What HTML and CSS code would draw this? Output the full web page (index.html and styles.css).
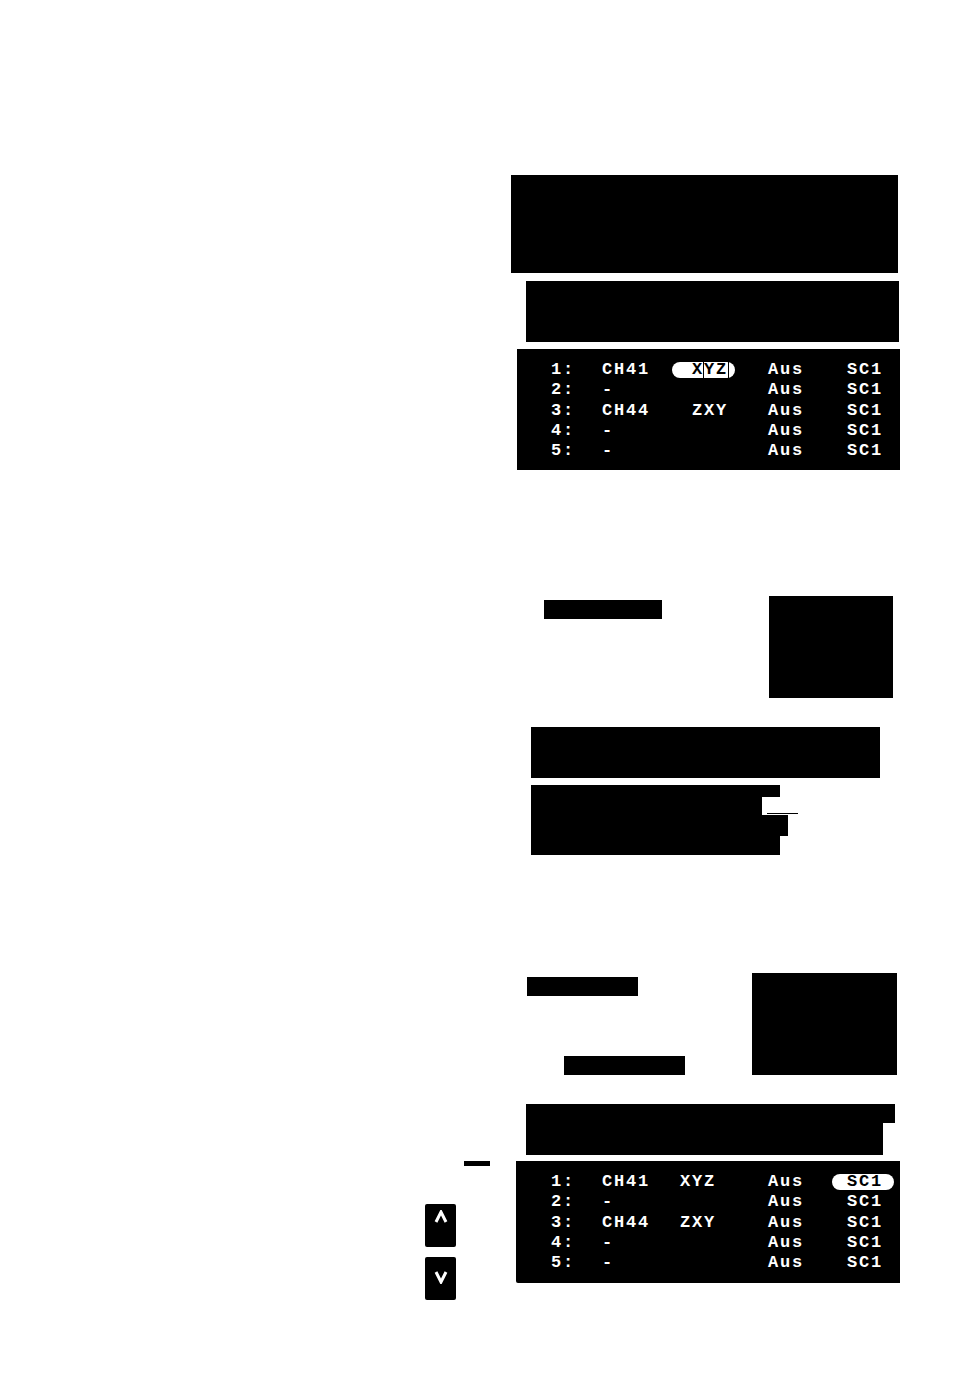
FILE: index.html
```html
<!DOCTYPE html>
<html lang="de">
<head>
  <meta charset="UTF-8">
  <title>Programmliste</title>
  <link rel="stylesheet" href="styles.css">
</head>
<body>

<div class="sheet">

  <!-- Abschnitt 1 -->
  <div class="section first">
    <div class="bar title"></div>
    <div class="bar sub"></div>
    <div class="osd osd-one">
      <div class="row"><span>1:</span><span>CH41</span><span><span class="pill pill-name">X<span class="cursor">YZ</span></span></span><span>Aus</span><span>SC1</span></div>
      <div class="row"><span>2:</span><span>-</span><span></span><span>Aus</span><span>SC1</span></div>
      <div class="row"><span>3:</span><span>CH44</span><span>ZXY</span><span>Aus</span><span>SC1</span></div>
      <div class="row"><span>4:</span><span>-</span><span></span><span>Aus</span><span>SC1</span></div>
      <div class="row"><span>5:</span><span>-</span><span></span><span>Aus</span><span>SC1</span></div>
    </div>
  </div>

  <!-- Abschnitt 2 -->
  <div class="section second">
    <div class="split">
      <div class="bar label-a"></div>
      <div class="bar box-a"></div>
    </div>
    <div class="bar wide-a"></div>
    <div class="para">
      <div class="bar strip s1"></div>
      <div class="strip-row">
        <div class="bar strip s2"></div>
        <div class="rule"></div>
      </div>
      <div class="bar strip s3"></div>
      <div class="bar strip s4"></div>
    </div>
  </div>

  <!-- Abschnitt 3 -->
  <div class="section third">
    <div class="split">
      <div class="labels">
        <div class="bar label-b"></div>
        <div class="bar label-c"></div>
      </div>
      <div class="bar box-b"></div>
    </div>
    <div class="para para-b">
      <div class="bar strip t1"></div>
      <div class="bar strip t2"></div>
    </div>
  </div>

  <div class="section last">
    <div class="side">
      <div class="dash"></div>
      <div class="key up">
        <svg width="14" height="14" viewBox="0 0 14 14"><polyline points="2,12 7,2 12,12" fill="none" stroke="#fff" stroke-width="3" stroke-linejoin="miter"/></svg>
      </div>
      <div class="key down">
        <svg width="14" height="14" viewBox="0 0 14 14"><polyline points="2,2 7,12 12,2" fill="none" stroke="#fff" stroke-width="3" stroke-linejoin="miter"/></svg>
      </div>
    </div>
    <div class="osd osd-two">
      <div class="row"><span>1:</span><span>CH41</span><span>XYZ</span><span>Aus</span><span><span class="pill pill-src">SC1</span></span></div>
      <div class="row"><span>2:</span><span>-</span><span></span><span>Aus</span><span>SC1</span></div>
      <div class="row"><span>3:</span><span>CH44</span><span>ZXY</span><span>Aus</span><span>SC1</span></div>
      <div class="row"><span>4:</span><span>-</span><span></span><span>Aus</span><span>SC1</span></div>
      <div class="row"><span>5:</span><span>-</span><span></span><span>Aus</span><span>SC1</span></div>
    </div>
  </div>

</div>

</body>
</html>
```

FILE: styles.css
```css
body {
  margin: 0;
  background: #fff;
  font-family: "Liberation Mono", "DejaVu Sans Mono", monospace;
}
.sheet {
  margin-left: 425px;
  width: 475px;
  padding-top: 175px;
}
.section { padding-left: 86px; }
.bar { background: #000; }

/* section 1 */
.title { width: 387px; height: 98px; }
.sub { margin: 8px 0 0 15px; width: 373px; height: 61px; }

.osd {
  background: #000;
  color: #fff;
  font-weight: bold;
  font-size: 17px;
  letter-spacing: 1.8px;
  line-height: 20.3px;
  padding-top: 11px;
  box-sizing: border-box;
}
.osd .row { display: grid; white-space: pre; }
.osd-one {
  margin: 7px 0 0 6px;
  width: 383px;
  height: 121px;
  padding-left: 34px;
}
.osd-one .row { grid-template-columns: 51px 90px 76px 79px auto; }
.osd-two {
  width: 384px;
  height: 122px;
  padding-left: 35px;
  border-bottom-left-radius: 2px;
}
.osd-two .row { grid-template-columns: 51px 78px 88px 79px auto; }

.pill {
  display: inline-block;
  background: #fff;
  color: #000;
  height: 16px;
  line-height: 16px;
  border-radius: 8px;
  vertical-align: middle;
}
.pill-name { margin-left: -20px; padding: 0 7px 0 20px; }
.pill-name .cursor { outline: 1px solid #000; }
.pill-src { margin-left: -15px; padding: 0 11px 0 15px; }

/* section 2 */
.second { margin-top: 126px; }
.split { display: flex; align-items: flex-start; }
.label-a { margin: 4px 0 0 33px; width: 118px; height: 19px; }
.box-a { margin-left: 107px; width: 124px; height: 102px; }
.wide-a { margin: 29px 0 0 20px; width: 349px; height: 51px; }
.para { margin: 7px 0 0 20px; }
.strip-row { display: flex; align-items: flex-start; }
.s1 { width: 249px; height: 12px; }
.s2 { width: 231px; height: 18px; }
.rule { margin: 16px 0 0 5px; width: 31px; height: 1px; background: #000; }
.s3 { width: 257px; height: 21px; }
.s4 { width: 249px; height: 19px; }

/* section 3 */
.third { margin-top: 118px; }
.labels { width: 241px; }
.label-b { margin: 4px 0 0 16px; width: 111px; height: 19px; }
.label-c { margin: 60px 0 0 53px; width: 121px; height: 19px; }
.box-b { width: 145px; height: 102px; }
.para-b { margin: 29px 0 0 15px; }
.t1 { width: 369px; height: 19px; }
.t2 { width: 357px; height: 32px; }

/* last */
.last {
  display: flex;
  align-items: flex-start;
  margin-top: 6px;
  padding-left: 0;
}
.side { width: 91px; }
.dash { margin-left: 39px; width: 26px; height: 5px; background: #000; }
.key {
  width: 31px;
  height: 43px;
  background: #000;
  border-radius: 2px;
  display: flex;
  justify-content: center;
}
.key.up { margin-top: 38px; padding-top: 6px; box-sizing: border-box; }
.key.down { margin-top: 10px; padding-top: 13px; box-sizing: border-box; }
```
